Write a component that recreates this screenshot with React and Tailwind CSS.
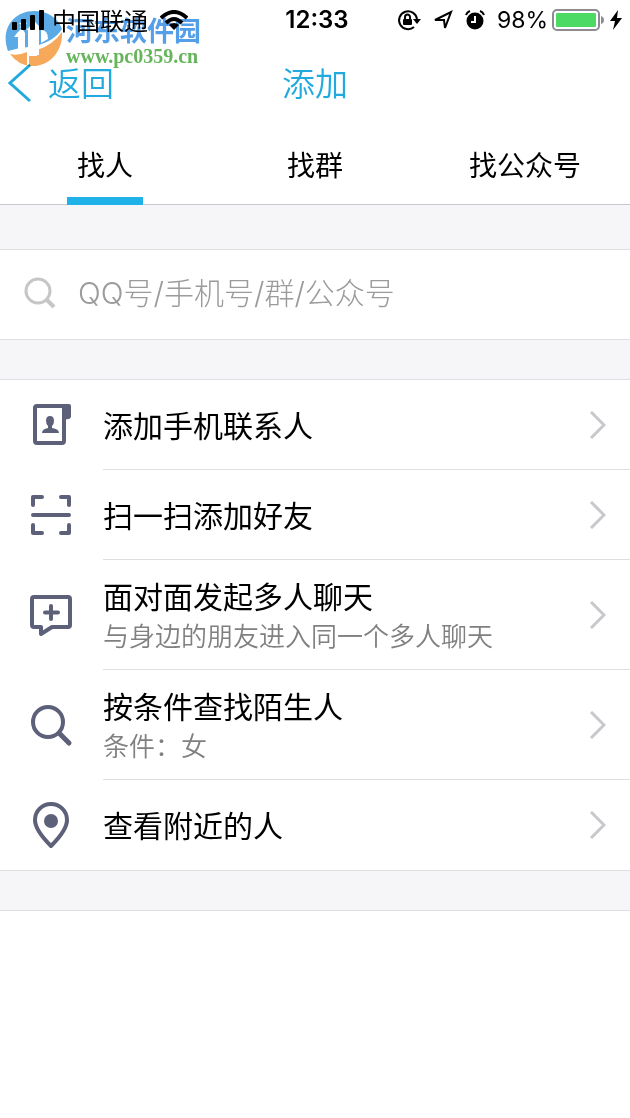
import React, { useState } from 'react'

const iconProps = {
  viewBox: '0 0 48 48',
  fill: 'none',
  stroke: 'currentColor',
  strokeWidth: 4,
  strokeLinecap: 'round',
  strokeLinejoin: 'round',
  className: 'size-12 shrink-0 text-[#5d6079]',
  'aria-hidden': true,
}

const ContactIcon = () => (
  <svg {...iconProps}>
    <path d="M37 5H10Q8 5 8 7V40Q8 42 10 42H35Q37 42 37 40V5Z" />
    <path d="M37 3H42Q44 3 44 5V16Q43 19 38 18Z" fill="currentColor" stroke="none" />
    <path
      d="M15 32Q15 28 21 27V25Q19 23 19 20Q19 15 23 15T27 20Q27 23 25 25V27Q32 28 32 32Z"
      fill="currentColor"
      stroke="none"
    />
  </svg>
)

const ScanIcon = () => (
  <svg {...iconProps}>
    <path d="M6 14V6H15M34 6H42V14M6 34V42H15M34 42H42V34M6 24H42" />
  </svg>
)

const ChatIcon = () => (
  <svg {...iconProps}>
    <path d="M7 6H41Q43 6 43 8V34Q43 36 41 36H25L14 43V36H7Q5 36 5 34V8Q5 6 7 6Z" />
    <path d="M24 15V28M18 21.500H31" />
  </svg>
)

const SearchIcon = () => (
  <svg {...iconProps}>
    <circle cx="21" cy="21" r="15" />
    <path d="M33 33L42 42" strokeWidth="5" />
  </svg>
)

const PinIcon = () => (
  <svg {...iconProps}>
    <path d="M24 45Q8 29 8 19A16 16 0 0 1 40 19Q40 29 24 45Z" />
    <circle cx="24" cy="20" r="7" fill="currentColor" stroke="none" />
  </svg>
)

const tabs = ['找人', '找群', '找公众号']

const entries = [
  { title: '添加手机联系人', icon: ContactIcon },
  { title: '扫一扫添加好友', icon: ScanIcon },
  { title: '面对面发起多人聊天', note: '与身边的朋友进入同一个多人聊天', icon: ChatIcon },
  { title: '按条件查找陌生人', note: '条件：女', icon: SearchIcon },
  { title: '查看附近的人', icon: PinIcon },
]

function StatusBar() {
  return (
    <div className="grid h-10 grid-cols-[1fr_auto_1fr] items-center pl-3 pr-2">
      <div className="flex items-center gap-2">
        <svg viewBox="0 0 32 20" className="h-5 w-8" aria-hidden="true">
          <rect x="0" y="12" width="5" height="8" rx="1" />
          <rect x="9" y="9" width="5" height="11" rx="1" />
          <rect x="18" y="5" width="5" height="15" rx="1" />
          <rect x="27" y="0" width="5" height="20" rx="1" />
        </svg>
        <span className="text-2xl leading-8">中国联通</span>
        <svg viewBox="0 0 28 20" className="ml-1 h-5 w-7" fill="none" stroke="#000" strokeWidth="4" aria-hidden="true">
          <path d="M1 8Q14 -4 27 8M6 13Q14 5 22 13" />
          <path d="M9 15Q14 11 19 15L14 20Z" fill="#000" stroke="none" />
        </svg>
      </div>

      <span className="font-[Inter] text-2xl font-semibold">12:33</span>

      <div className="flex items-center justify-end">
        {/* Rotation lock */}
        <svg viewBox="0 0 24 24" className="mr-3 size-6" fill="none" stroke="#000" strokeWidth="2" aria-hidden="true">
          <path d="M17 19A9 9 0 1 1 20 11" />
          <path d="M16 11H24L20 16Z" fill="#000" stroke="none" />
          <rect x="6" y="11" width="9" height="6" rx="1" fill="#000" stroke="none" />
          <path d="M8 12V9a2.500 2.500 0 0 1 5 0V12" />
        </svg>
        {/* Location */}
        <svg viewBox="0 0 20 20" className="mr-3 size-5" fill="none" stroke="#000" strokeWidth="2" aria-hidden="true">
          <path d="M2 10L18 2L12 18L11 10Z" />
        </svg>
        {/* Alarm */}
        <svg viewBox="0 0 20 20" className="mr-3 size-5" fill="none" stroke="#000" strokeWidth="2" aria-hidden="true">
          <circle cx="10" cy="11" r="8.500" fill="#000" stroke="none" />
          <path d="M1 5Q2 2 5 1M15 1Q18 2 19 5" />
          <path d="M10 6V12H6" stroke="#fff" />
        </svg>
        <span className="mr-1 font-[Inter] text-[23px]">98%</span>
        {/* Battery */}
        <svg viewBox="0 0 54 24" className="mr-1 h-6 w-[54px]" aria-hidden="true">
          <rect x="1" y="2" width="46" height="20" rx="4" fill="#fff" stroke="#8e8b92" strokeWidth="2" />
          <rect x="4" y="5" width="40" height="14" rx="1" fill="#4cd964" />
          <path d="M49 8Q52 9 52 12T49 16Z" fill="#8e8b92" />
        </svg>
        <svg viewBox="0 0 12 20" className="h-5 w-3" aria-hidden="true">
          <path d="M8 0L0 11H5L3 20L12 8H7Z" />
        </svg>
      </div>
    </div>
  )
}

function Watermark() {
  return (
    <div className="pointer-events-none absolute left-1 top-2 flex items-start gap-1 mix-blend-multiply">
      <svg viewBox="0 0 58 60" className="h-[60px] w-[58px]" aria-hidden="true">
        <path d="M4 43C-4 22 9 3 30 3C44 3 54 10 58 21C52 30 44 34 35 37V25L31 14L24 22V39Q14 40 4 43Z" fill="#5baae5" />
        <path d="M58 24C59 42 47 58 28 58Q15 58 6 46Q14 48 23 44V58H33V42Q49 37 58 24Z" fill="#f6a95b" />
        <path d="M13 25L18 20L21 25V44H14V29H10ZM31 14L35 18V47H33V44L25 46V22H22Z" fill="#fff" />
        <path d="M25 48H33V58H25Z" fill="#f6a95b" />
        <path d="M37 22Q44 22 44 31L37 35Z" fill="#fff" />
        <path d="M19 12l1 3h3l-2 2 1 3-3-2-3 2 1-3-2-2h3z" fill="#fff" />
      </svg>
      <div className="flex flex-col gap-0.5 pt-2">
        <span className="text-[27px] font-bold leading-7 text-[#559fe8]">河东软件园</span>
        <span className="font-['Liberation_Serif'] text-xl font-bold leading-5 text-[#65b55b]">www.pc0359.cn</span>
      </div>
    </div>
  )
}

function Entry({ entry, last }) {
  const Icon = entry.icon
  return (
    <li className="flex items-stretch pl-[27px]">
      <button type="button" className="flex w-full items-center gap-7 text-left">
        <Icon />
        <span
          className={`flex flex-1 items-center justify-between self-stretch pr-6 ${
            entry.note ? 'h-[110px]' : 'h-[90px]'
          } ${last ? '' : 'border-b border-[#dedfe0]'}`}
        >
          <span className="flex flex-col gap-0.5 pb-0.5">
            <span className="text-3xl leading-10">{entry.title}</span>
            {entry.note && (
              <span className="text-[26px] font-[350] leading-9 text-[#808080]">{entry.note}</span>
            )}
          </span>
          <svg viewBox="0 0 16 28" className="h-7 w-4" fill="none" stroke="#c7c7cc" strokeWidth="3" aria-hidden="true">
            <path d="M1 1L14 14L1 27" />
          </svg>
        </span>
      </button>
    </li>
  )
}

function App() {
  const [active, setActive] = useState(0)

  return (
    <div className="relative min-h-screen bg-white font-['Noto_Sans_CJK_SC',sans-serif] text-black">
      <header className="border-b border-[#c8c8ca]">
        <StatusBar />

        <div className="grid h-[88px] grid-cols-3 items-center pb-0.5 text-[33px] font-[350] text-[#22aade]">
          <button type="button" className="flex items-center gap-4 pl-2">
            <svg viewBox="0 0 24 40" className="h-10 w-6" fill="none" stroke="currentColor" strokeWidth="3" aria-hidden="true">
              <path d="M22 2L2 20L22 38" />
            </svg>
            返回
          </button>
          <h1 className="text-center">添加</h1>
        </div>

        <nav className="-mb-px grid h-[77px] grid-cols-3">
          {tabs.map((tab, i) => (
            <button
              key={tab}
              type="button"
              onClick={() => setActive(i)}
              className="flex flex-col items-center justify-between pt-1 text-[28px] leading-[64px]"
            >
              {tab}
              {active === i && <span className="h-2 w-[76px] bg-[#1eb2e8]" />}
            </button>
          ))}
        </nav>
      </header>

      <main className="bg-[#f6f6f8] pt-11">
        <label className="flex h-[91px] items-center gap-[22px] border-y border-[#dedfe0] bg-white pb-1 pl-6">
          <svg viewBox="0 0 32 32" className="size-8 shrink-0" fill="none" stroke="#c6c6c6" strokeWidth="3" aria-hidden="true">
            <circle cx="14" cy="14" r="12" />
            <path d="M23 23L30 30" strokeWidth="4" />
          </svg>
          <input
            type="text"
            aria-label="QQ号/手机号/群/公众号"
            placeholder="QQ号/手机号/群/公众号"
            className="min-w-0 flex-1 font-[Inter,'Noto_Sans_CJK_SC',sans-serif] text-3xl font-light outline-none placeholder:text-[#9b9b9b]"
          />
        </label>

        <ul className="mt-[39px] border-y border-[#dedfe0] bg-white">
          {entries.map((entry, i) => (
            <Entry key={entry.title} entry={entry} last={i === entries.length - 1} />
          ))}
        </ul>

        <div className="h-10 border-b border-[#dedfe0]" />
      </main>

      <Watermark />
    </div>
  )
}

export default App
